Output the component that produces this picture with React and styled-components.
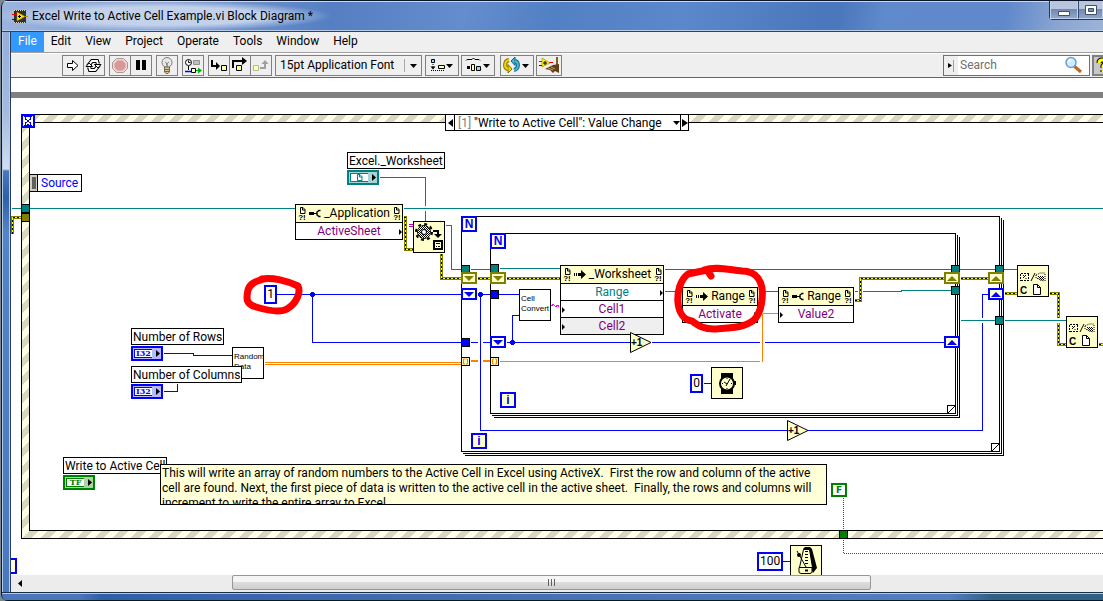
import React from 'react';
import styled, { createGlobalStyle, css } from 'styled-components';

const GlobalStyle = createGlobalStyle`
  *,
  *:before {
    box-sizing: border-box;
  }

  body {
    margin: 0;
    background: #7d8790;
    color: #000;
    font-family: Roboto, 'Open Sans', sans-serif;
    font-size: 12px;
    line-height: 17px;
  }

  button,
  input,
  select {
    margin: 0;
    padding: 0;
    border: 0;
    border-radius: 0;
    background: none;
    color: inherit;
    font: inherit;
  }
`;

const BLUE = '#0000ff';
const TEAL = '#008080';
const OLIVE = '#808000';
const GREEN = '#008000';
const ORANGE = '#ff8000';
const PURPLE = '#800080';
const CREAM = '#ffffcc';

/* ---------- window chrome ---------- */

const Window = styled.div`
  display: flex;
  flex-direction: column;
  height: 100vh;
  margin-left: 1px;
  border-left: 1px solid #101828;
  border-radius: 7px 0 0 7px;
  background: #4a78bc;
  overflow: hidden;
`;

const TitleBar = styled.header`
  display: flex;
  flex: 0 0 32px;
  align-items: center;
  padding-left: 10px;
  border-top: 1px solid #0c1428;
  border-bottom: 1px solid #2c4468;
  box-shadow: inset 0 1px 0 #c8daf2, inset 0 -1px 0 #b4cbea;
  background: radial-gradient(ellipse 170px 15px at 160px 15px, #c3d2ea 60%, transparent 100%),
    linear-gradient(
      100deg,
      #9cb4dd 0%,
      #7f9fd4 15%,
      #557fc2 30%,
      #648dcd 42%,
      #5280c4 50%,
      #5b88ca 62%,
      #4b78bc 74%,
      #4b78bc 76%,
      #5f8acb 80%,
      #6089cb 91%,
      #8ba6d2 96%,
      #9db3d8 100%
    );

  h1 {
    flex: 1;
    margin: 0 0 0 4px;
    font-size: 12px;
    font-weight: 400;
    white-space: nowrap;
  }
`;

const WindowButtons = styled.div`
  display: flex;
  align-self: flex-start;
  height: 19px;
  border: 1px solid #26385a;
  border-width: 0 0 1px 1px;
  border-radius: 0 0 0 4px;
`;

const WindowButton = styled.button`
  display: grid;
  place-items: center;
  width: 28px;
  border: 1px solid #c5d3e8;
  border-top: 0;
  background: linear-gradient(#b7c6de 0 48%, #7288b0 50%, #8ea6cc);

  & + & {
    width: 25px;
    border-left: 1px solid #33486e;
  }
`;

const Body = styled.div`
  display: flex;
  flex: 1;
  min-height: 0;
`;

const LeftFrame = styled.div`
  flex: 0 0 9px;
  border: 1px solid #b4cbea;
  border-width: 0 0 0 1px;
  box-shadow: inset -1px 0 0 #263c60, inset -2px 0 0 #b9cde8;
  background: linear-gradient(
    #96afd9 0,
    #a4bade 80px,
    #d3deef 137px,
    #4a78bc 139px,
    #2f5fa4 165px,
    #5384c6 200px,
    #4a78bc 100%
  );
`;

const BottomFrame = styled.div`
  flex: 0 0 9px;
  border-top: 1px solid #1c2c44;
  border-bottom: 1px solid #0c1428;
  box-shadow: inset 0 1px 0 #b0c8e4;
  background: linear-gradient(90deg, #4a76ba 0 7%, #2e60a8 9%, #3a68ae 24%, #4a76b8 60%, #5080c0 86%, #2c6084 90%);
`;

const Content = styled.div`
  display: flex;
  flex: 1;
  flex-direction: column;
  min-width: 0;
  background: #fff;
`;

const MenuBar = styled.nav`
  display: flex;
  height: 21px;
  border-bottom: 1px solid #a0a0a0;
  background: #efefef;
`;

const MenuItem = styled.button`
  padding: 0 7px 1px;
  background: ${({ $active }) => ($active ? '#3399ff' : 'transparent')};
  color: ${({ $active }) => ($active ? '#fff' : '#000')};
`;

/* ---------- toolbar ---------- */

const Toolbar = styled.div`
  display: flex;
  flex: 0 0 25px;
  justify-content: space-between;
  padding: 1px 0 1px 51px;
  border-top: 1px solid #fff;
  border-bottom: 1px solid #646464;
  background: #efefef;
`;

const ToolCluster = styled.div`
  display: flex;
  gap: ${({ $gap }) => $gap}px;
`;

const ToolGroup = styled.div`
  display: flex;
  height: 21px;
  border: 1px solid #808080;
`;

const ToolButton = styled.button`
  display: flex;
  align-items: center;
  width: ${({ $width = 20 }) => $width}px;
  height: 19px;

  & + & {
    width: 21px;
    border-left: 1px solid #808080;
  }
`;

const FontPicker = styled.div`
  display: grid;
  grid-template-columns: 1fr 17px;
  align-items: center;
  width: 147px;
  height: 21px;
  padding-left: 4px;
  border: 1px solid #808080;

  select {
    height: 19px;
    appearance: none;
    outline: 0;
  }

  svg {
    border-left: 1px solid #a8a8a8;
  }
`;

const SearchBox = styled.div`
  display: flex;
  width: 147px;
  height: 21px;
  border: 1px solid #707070;
  background: #fff;

  button {
    width: 14px;
    background: #efefef;
  }

  input {
    flex: 1;
    min-width: 0;
    padding-left: 2px;
    outline: 0;
  }

  input::placeholder {
    color: #6f6f6f;
    opacity: 1;
  }
`;

const HelpButton = styled.button`
  flex: 0 0 11px;
  height: 21px;
  border: 2px solid #808080;
  border-right: 0;
  background: #c8c8c8;
  overflow: hidden;
`;

/* ---------- block diagram ---------- */

const DiagramEdge = styled.div`
  flex: 0 0 20px;
  border-bottom: 6px solid #808080;
`;

const Diagram = styled.main`
  position: relative;
  flex: 1;
  min-height: 0;
  overflow: hidden;
`;

// the part of the diagram scrolled out of view
const ORIGIN = { x: 11, y: 98 };

const placed = css`
  position: absolute;
  left: ${({ $x }) => $x - ORIGIN.x}px;
  top: ${({ $y }) => $y - ORIGIN.y}px;
`;

const Layer = styled.svg`
  position: absolute;
  inset: 0;
  width: 100%;
  height: 100%;
  pointer-events: none;
`;

const EventStructure = styled.section`
  ${placed}
  right: -20px;
  height: 425px;
  padding: 7px;
  border: 1px solid #000;
  background: linear-gradient(
      135deg,
      #ffffe6 25%,
      #d8d8c2 25% 50%,
      #ffffe6 50% 75%,
      #d8d8c2 75%
    )
    0 0 / 18px 18px;

  div {
    height: 100%;
    border: 1px solid #000;
    background: #fff;
  }
`;

const CaseSelector = styled.div`
  ${placed}
  display: flex;
  width: 244px;
  height: 17px;
  border: 1px solid #000;
  background: #fff;

  button {
    display: grid;
    place-items: center;
    width: 8px;
  }

  label {
    padding-left: 3px;
    border-left: 1px solid #000;
    color: #808080;
  }

  select {
    flex: 1;
    min-width: 0;
    height: 17px;
    padding-left: 3px;
    appearance: none;
    outline: 0;
  }

  button:last-child {
    border-left: 1px solid #000;
  }
`;

const EventData = styled.div`
  ${placed}
  display: flex;
  height: 18px;
  border: 1px solid #000;
  background: #fff;
  color: ${BLUE};

  &:before {
    content: '';
    width: 7px;
    border: 2px solid #d0d0c0;
    border-right-width: 1px;
    background: #606060;
  }

  span {
    height: 16px;
    padding: 0 3px;
    border-left: 1px solid #000;
  }
`;

const Loop = styled.section`
  ${placed}
  width: ${({ $w }) => $w}px;
  height: ${({ $h }) => $h}px;
  border: 1px solid #000;
  background: #fff;
  box-shadow: 1px 1px 0 #fff, 2px 2px 0 #000, 3px 3px 0 #fff, 4px 4px 0 #000;

  svg {
    position: absolute;
    right: -1px;
    bottom: -1px;
  }
`;

const LoopTerminal = styled.div`
  ${placed}
  width: ${({ $size = 16 }) => $size}px;
  height: ${({ $size = 16 }) => $size}px;
  border: 2px solid ${BLUE};
  background: ${CREAM};
  color: ${BLUE};
  font: 700 12px/12px 'Liberation Sans', sans-serif;
  text-align: center;
`;

const Tunnel = styled.div`
  ${placed}
  display: grid;
  width: 9px;
  height: 9px;
  border: 1px solid #000;
  background: ${({ $color }) => $color};
`;

const Register = styled.div`
  ${placed}
  display: grid;
  place-items: center;
  width: 16px;
  height: 12px;
  border: 2px solid ${({ $color }) => $color};
  background: ${CREAM};
`;

const Caption = styled.label`
  ${placed}
  height: 17px;
  padding: 0 1px;
  border: 1px solid #000;
  background: #fff;
  white-space: nowrap;
`;

const TerminalBox = styled.button`
  ${placed}
  display: flex;
  width: 32px;
  height: 15px;
  padding: 1px;
  border: 2px solid ${({ $color }) => $color};
  background: ${({ $tint }) => $tint};
  color: ${({ $color }) => $color};
  font: 700 8px/7px 'DejaVu Serif', serif;

  span {
    display: grid;
    flex: 1;
    place-items: center;
    height: 9px;
    border: 1px solid ${({ $color }) => $color};
    border-right: 0;
    background: #fff;
  }

  svg {
    flex: none;
  }
`;

const Constant = styled.div`
  ${placed}
  height: ${({ $h = 19 }) => $h}px;
  min-width: 13px;
  padding: 0 1px;
  border: 2px solid ${({ $color = BLUE }) => $color};
  background: #fff;
  line-height: 15px;
  text-align: center;
`;

const BoolConstant = styled(Constant)`
  width: 16px;
  color: ${GREEN};
  font: 700 9px/10px 'DejaVu Sans', sans-serif;
`;

const NodeBox = styled.div`
  ${placed}
  width: ${({ $w }) => $w}px;
  border: 1px solid #000;
  background: #fff;
`;

const NodeHeader = styled.div`
  display: flex;
  align-items: center;
  justify-content: space-between;
  height: 17px;
  padding: 0 1px 0 2px;
  background: ${CREAM};
`;

const RefMark = styled.span`
  display: flex;
  flex-direction: column;
  align-items: center;
  width: 8px;
  font: 700 8px/7px 'Liberation Sans', sans-serif;
`;

const NodeRow = styled.div`
  display: grid;
  grid-template-columns: 4px 1fr 4px;
  align-items: center;
  height: 17px;
  border-top: 1px solid #000;
  background: ${({ $shaded }) => ($shaded ? '#efefef' : '#fff')};
  color: ${({ $color = PURPLE }) => $color};
  text-align: center;
`;

const SubVi = styled.div`
  ${placed}
  width: 32px;
  height: 32px;
  border: 1px solid #000;
  background: ${({ $plain }) => ($plain ? '#fff' : CREAM)};
  font: 8px/10px 'Liberation Sans', sans-serif;
  overflow: hidden;
`;

const SubViText = styled.div`
  padding: 4px 0 0 1px;
`;

const Increment = styled.svg`
  ${placed}
  font: 700 10px 'Liberation Sans', sans-serif;
`;

const Comment = styled.p`
  ${placed}
  width: 667px;
  height: 41px;
  margin: 0;
  padding: 1px;
  border: 1px solid #000;
  background: #ffffd8;
  line-height: 15px;
  white-space: pre;
  overflow: hidden;
`;

const Scrollbar = styled.div`
  display: flex;
  flex: 0 0 17px;
  background: #ececec;

  button {
    width: 17px;
  }
`;

const ScrollThumb = styled.div`
  display: grid;
  place-items: center;
  width: 639px;
  height: 15px;
  margin-left: 204px;
  border: 1px solid #979797;
  border-radius: 2px;
  background: linear-gradient(#f5f5f5 0 45%, #dcdcdc 50%, #cfcfcf);
`;

/* ---------- small drawings ---------- */

const Triangle = ({ dir = 'down', color = '#000', w = 7, h = 4 }) => {
  const points = {
    down: `0,0 ${w},0 ${w / 2},${h}`,
    up: `0,${h} ${w},${h} ${w / 2},0`,
    left: `${w},0 ${w},${h} 0,${h / 2}`,
    right: `0,0 ${w},${h / 2} 0,${h}`,
  };

  return (
    <svg width={w} height={h} aria-hidden="true">
      <polygon points={points[dir]} fill={color} />
    </svg>
  );
};

const PageIcon = ({ color = '#000' }) => (
  <svg width="7" height="7" fill="none" stroke={color}>
    <path d="M1.500 .5h2.500l2 2v4H1.500zM3.500 .5v2.500H6" />
  </svg>
);

const PropertyIcon = () => (
  <svg width="12" height="9">
    <path d="M0 3h5v3H0zM5 4h3v1H5z" />
    <path d="M11.500 1.500H10L8 3v3l2 1.500h1.500" fill="none" stroke="#000" strokeWidth="1.400" />
  </svg>
);

const InvokeIcon = () => (
  <svg width="12" height="9">
    <path d="M0 3h1v3H0zM2 3h1v3H2zM4 3h4v3H4zM7 0l5 4.500L7 9z" />
  </svg>
);

const DropArrow = () => <path d="M0 0h7L3.500 4z" />;

const AppIcon = () => (
  <svg width="16" height="15" aria-hidden="true">
    <path d="M2 1h12v13H2z" fill="#30302c" />
    <path d="M2 1.500h12M2 13.500h12" stroke="#d8d8c8" strokeDasharray="1 1" />
    <path d="M5 3l8 4.500L5 12z" fill="#ffe400" stroke="#a88800" strokeWidth=".5" />
    <path d="M6 7.500h3M7.500 6v3" stroke="#000" />
    <path d="M0 5.500h5" stroke="#e00000" />
    <path d="M0 10.500h4" stroke="#0000e0" />
    <path d="M13 7.500h3" stroke="#e07000" />
  </svg>
);

const RunIcon = () => (
  <svg width="20" height="19">
    <path d="M4.500 7.500h5v-3l5.500 5-5.500 5v-3h-5z" fill="#fff" stroke="#000" />
  </svg>
);

const RunLoopIcon = () => (
  <svg width="20" height="19" fill="none">
    <path d="M4 10L8 5h3M15 9l-4 5H8" stroke="#000" strokeWidth="4" />
    <path d="M4.500 9L8 5h4M14.500 10L11 14H7" stroke="#fff" strokeWidth="2" />
    <path d="M11 5h2l1 3" stroke="#000" strokeWidth="4" />
    <path d="M8 14H6l-1-3" stroke="#000" strokeWidth="4" />
    <path d="M10 5h3l1 3.500M9 14H6l-1-3.500" stroke="#fff" strokeWidth="2" />
    <path d="M10.500 8.500h6.500L14 12zM8.500 10.500H2L5 7z" fill="#fff" stroke="#000" />
  </svg>
);

const AbortIcon = () => (
  <svg width="20" height="19">
    <path d="M6.500 2.500h7l4 4v6l-4 4h-7l-4-4v-6z" fill="#f0d4d4" stroke="#a89898" />
    <path d="M7.500 4.500h5l3 3v4l-3 3h-5l-3-3v-4z" fill="#d89898" />
  </svg>
);

const PauseIcon = () => (
  <svg width="20" height="19">
    <path d="M5 4h4v10H5zM11 4h4v10h-4z" />
  </svg>
);

const BulbIcon = () => (
  <svg width="20" height="19">
    <circle cx="10" cy="6.500" r="5" fill="#e8e8e8" stroke="#808080" />
    <path d="M8 6l1.500 1L10 11l.5-4L12 6" fill="none" stroke="#888" />
    <path d="M7.500 11h5v5l-1.500 1.500H9L7.500 16z" fill="#d8c890" stroke="#706850" />
    <path d="M8 13.500h4M8 15.500h4" stroke="#706850" />
  </svg>
);

const RetainIcon = () => (
  <svg width="20" height="19" fill="none">
    <circle cx="5.500" cy="6.500" r="3" fill="#fff" stroke="#000" />
    <path d="M5.500 4.500v2h2M5.500 10v4" stroke="#000" />
    <path d="M10.500 4.500h6v4h-6z" fill="#c0c0c0" stroke="#909090" />
    <path d="M2 15.500h6" stroke="#0000ff" strokeWidth="1.500" />
    <path d="M8.500 12.500h4v4h-4z" fill="#ffffc0" stroke="#000" />
    <path d="M13 14.500h2" stroke="#00b000" />
    <path d="M15 11.500l4 3-4 3z" fill="#00b000" />
  </svg>
);

const StepIntoIcon = () => (
  <svg width="20" height="19">
    <path d="M3 4v6h5" fill="none" stroke="#000" strokeWidth="2" />
    <path d="M7 6l4 4-4 4z" />
    <path d="M12.500 9.500h5v5h-5z" fill="#ffffa0" stroke="#000" />
  </svg>
);

const StepOverIcon = () => (
  <svg width="20" height="19">
    <path d="M3 12V5h10" fill="none" stroke="#000" strokeWidth="2" />
    <path d="M12 1l5 4-5 4z" />
    <path d="M6.500 9.500h5v5h-5z" fill="#ffffa0" stroke="#000" />
  </svg>
);

const StepOutIcon = () => (
  <svg width="20" height="19">
    <path d="M2.500 9.500h5v5h-5z" fill="#ffffb8" stroke="#b8b898" />
    <path d="M9 12h5V7" fill="none" stroke="#a0a0a0" strokeWidth="2" />
    <path d="M10.500 8l3.500-4 3.500 4z" fill="#a0a0a0" />
  </svg>
);

const AlignIcon = () => (
  <svg width="32" height="19" fill="none">
    <path d="M5.500 3.500h3v3h-3z" fill="#80e0ff" stroke="#000" />
    <path d="M7 8v4M5 14.500h14" stroke="#000" strokeDasharray="1 1" />
    <path d="M4.500 10.500h5L7 13.500z" fill="#000" />
    <path d="M12.500 9.500h6v3h-6z" fill="#ffffa0" stroke="#000" />
    <g transform="translate(20 8)" fill="#000">
      <DropArrow />
    </g>
  </svg>
);

const DistributeIcon = () => (
  <svg width="32" height="19" fill="none">
    <path d="M4 4.500l1-1h5l1.500-1.500 1.500 1.500h4l1 1" stroke="#000" />
    <path d="M5 10h3v3H5z" fill="#000" />
    <path d="M9.500 8.500h3v6h-3z" fill="#ffffa0" stroke="#000" />
    <path d="M14.500 10.500h4v4h-4z" fill="#80e0ff" stroke="#000" />
    <g transform="translate(21 8)" fill="#000">
      <DropArrow />
    </g>
  </svg>
);

const ReorderIcon = () => (
  <svg width="32" height="19" fill="none">
    <path d="M8 4C3 5 3 12 7 13" stroke="#807000" strokeWidth="4" />
    <path d="M7 8.500l4 4.500-4 4z" fill="#f0d800" stroke="#807000" />
    <path d="M8 4C3 5 3 12 7 13" stroke="#f0d800" strokeWidth="2" />
    <path d="M13 14c5-1 5-8 1-9" stroke="#186080" strokeWidth="4" />
    <path d="M14 9.500L10 5l4-4z" fill="#40b8d8" stroke="#186080" />
    <path d="M13 14c5-1 5-8 1-9" stroke="#40b8d8" strokeWidth="2" />
    <g transform="translate(21 8)" fill="#000">
      <DropArrow />
    </g>
  </svg>
);

const CleanUpIcon = () => (
  <svg width="24" height="19">
    <path d="M2 5.500h4M12 6.500h4" stroke="#f00000" />
    <path d="M2 9.500h4" stroke="#0000ff" />
    <path d="M5 2l8 5-8 4z" fill="#ffee00" stroke="#807000" strokeWidth=".5" />
    <path d="M6 7h4M8 5v4" stroke="#000" />
    <path d="M19 1h2v8h-2z" fill="#806020" />
    <path d="M16 9l6-1v9l-4-2-2 2-3-3-5-1z" fill="#604018" />
    <path d="M11 12l5 2M14 11l4 2" stroke="#d0a060" />
  </svg>
);

const MagnifierIcon = () => (
  <svg width="25" height="19">
    <path d="M10 10l7 6" stroke="#b86820" strokeWidth="3" />
    <circle cx="7" cy="6.500" r="5" fill="#d0ecff" stroke="#6aa0d8" strokeWidth="1.500" />
    <path d="M4.500 5.500l2-2" stroke="#fff" strokeWidth="2" />
  </svg>
);

const GearIcon = () => (
  <svg width="30" height="30">
    <defs>
      <pattern id="dither" width="2" height="2" patternUnits="userSpaceOnUse">
        <path d="M0 0h1v1H0zM1 1h1v1H1z" />
      </pattern>
    </defs>
    <g fill="none" stroke="#000">
      <circle cx="10" cy="10" r="8" strokeWidth="2" strokeDasharray="3 3.280" />
      <circle cx="10" cy="10" r="6.500" />
    </g>
    <circle cx="10" cy="10" r="6" fill={CREAM} />
    <circle cx="10" cy="10" r="6.500" fill="url(#dither)" shapeRendering="crispEdges" />
    <circle cx="10" cy="10" r="2.500" fill="#fff" stroke="#000" />
    <path d="M19 9h5v4" fill="none" stroke="#000" strokeWidth="2" />
    <path d="M20 12h8l-4 4z" />
    <path d="M20 19h8v8h-8z" fill={CREAM} stroke="#000" strokeWidth="2" />
    <path d="M22 21.500h4M22 24.500h1M24 24.500h2" stroke="#000" />
  </svg>
);

const CloseRefIcon = () => (
  <svg width="30" height="30">
    <g fill="none" stroke="#000">
      <path d="M3 7.500h8M3 14.500h8M2.500 8v7M10.500 8v7" strokeDasharray="2 1" />
      <path d="M5 12l3-3M5 9l1 1M8 12v1" />
      <path d="M13 15l4-8" />
      <path d="M18 9l4-2h5M18 9v3l8 3M27 8v7" strokeDasharray="1 1" />
    </g>
    <path d="M20 10h6v4l-3 1-3-3z" fill="url(#dither)" />
    <text x="2" y="28" fontSize="10" fontWeight="700">
      C
    </text>
    <path d="M15.500 18.500h4l3 3v7h-7zM19.500 18.500v3h3" fill="#fff" stroke="#000" />
  </svg>
);

const WatchIcon = () => (
  <svg width="30" height="30">
    <path d="M9 5h12v5H9zM9 21h12v5H9z" />
    <circle cx="15" cy="15.500" r="7" fill={CREAM} stroke="#000" strokeWidth="2" />
    <path d="M18 11l-4 7M12 14l3 2M10 15.500h1M19 15.500h1M15 10v1M15 20v1" stroke="#000" />
    <path d="M22 13h2v4h-2z" />
  </svg>
);

const MetronomeIcon = () => (
  <svg width="30" height="30">
    <path d="M12 3l2-2h5l2 2 5 19-4 5z" />
    <path d="M12.500 3.500h6l3 18h-13z" fill={CREAM} stroke="#000" />
    <path d="M15.500 5v14" stroke="#000" strokeWidth="3" strokeDasharray="1 2" />
    <path d="M8 21.500h13v5l-2 1H10l-2-1z" fill={CREAM} stroke="#000" />
    <path d="M6 5l9 16" stroke="#000" />
    <circle cx="8" cy="9" r="2" />
    <path d="M14 24.500h3" stroke="#000" strokeWidth="2" />
  </svg>
);

const IndexIcon = () => (
  <svg width="7" height="7" fill="none" stroke={ORANGE}>
    <path d="M3 1H1.500v5H3M4 1h1.500v5H4" />
  </svg>
);

/* ---------- wires ---------- */

// breaks: drawn with a gap around it where it passes over an earlier wire
const wires = [
  { color: TEAL, d: 'M379 177H425V221' },
  { color: TEAL, d: 'M11 208H295M403 208H1103', breaks: true },
  { color: TEAL, d: 'M445 225H451V269H461M470 269H490M499 268H560M664 269H1017' },
  { color: TEAL, d: 'M664 291H682M758 291H778M854 291H901V290H951' },
  { kind: 'error', d: 'M12 233V217H21' },
  { kind: 'error', d: 'M403 217H405V249H413' },
  { kind: 'error', d: 'M441 253V278H461M477 278H490M506 278H560' },
  { kind: 'error', d: 'M854 300H860V278H944M960 278H988', breaks: true },
  { kind: 'error', d: 'M1004 293H1017M1049 293H1058V344H1066M1098 344H1103' },
  { color: '#c000c0', d: 'M408 224H413M408 226H413' },
  { color: BLUE, d: 'M276 294H461M477 294H519M312 294V342H461' },
  { color: BLUE, d: 'M470 342H490M506 342H630M512 342V315H519M651 342H944' },
  { color: BLUE, d: 'M163 353H193V355H232M163 391H177V383' },
  { color: ORANGE, d: 'M264 362H461M264 364H461M470 360H490M470 361H490M499 361H762' },
  { color: ORANGE, d: 'M762 361V313', breaks: true },
  { color: ORANGE, d: 'M762 313H778' },
  { color: BLUE, d: 'M480 297V430', breaks: true },
  { color: BLUE, d: 'M480 294V430H787M807 430H982V294H988' },
  { color: TEAL, d: 'M960 320H995M1004 320H1066', breaks: true },
  { color: BLUE, d: 'M703 383H711M782 561H790' },
  { color: GREEN, d: 'M843 497V553H1103', dash: '1 1' },
  { color: '#ff00ff', d: 'M551 305l2-1 2 2 2-1 2 1' },
];

const junctions = [
  [312, 294],
  [480, 294],
  [512, 342],
];

const Wires = () => (
  <Layer aria-hidden="true">
    <g
      transform={`translate(${0.5 - ORIGIN.x} ${0.5 - ORIGIN.y})`}
      fill="none"
      shapeRendering="crispEdges"
    >
      {wires.map(({ d, kind, color, breaks, dash }) => (
        <g key={d}>
          {breaks && <path d={d} stroke="#fff" strokeWidth="5" />}
          {kind === 'error' ? (
            <>
              <path d={d} stroke={OLIVE} strokeWidth="3" />
              <path d={d} stroke="#ffff00" />
              <path d={d} stroke="#000" strokeDasharray="2 2" />
            </>
          ) : (
            <path d={d} stroke={color} strokeDasharray={dash} />
          )}
        </g>
      ))}
      {junctions.map(([x, y]) => (
        <path key={`${x}-${y}`} d={`M${x - 1} ${y - 2}h2v1h1v2h-1v1h-2v-1h-1v-2h1z`} fill={BLUE} stroke={BLUE} />
      ))}
    </g>
  </Layer>
);

const Marker = () => (
  <Layer aria-hidden="true">
    <g
      transform={`translate(${-ORIGIN.x} ${-ORIGIN.y})`}
      fill="none"
      stroke="#ff0000"
      strokeLinecap="round"
      strokeLinejoin="round"
    >
      <path
        strokeWidth="7"
        d="M262 279C272 277 288 281 298 286C301 292 297 303 287 309C280 313 266 310 256 307C246 304 246 299 248 290C250 283 257 281 264 279"
      />
      <path
        strokeWidth="7"
        d="M711 276L707 270L688 274C680 280 677 292 678 303C679 313 684 320 692 321C698 325 702 329 714 329C730 328 744 328 754 320C762 312 763 296 762 288C760 276 752 271 742 271C730 270 716 266 704 270"
      />
    </g>
  </Layer>
);

/* ---------- diagram parts ---------- */

const tunnels = [
  [21, 204, TEAL],
  [21, 213, OLIVE],
  [461, 265, TEAL],
  [490, 264, TEAL],
  [490, 290, BLUE],
  [461, 338, BLUE],
  [951, 265, TEAL],
  [995, 265, TEAL],
  [951, 286, TEAL],
  [995, 316, TEAL],
  [839, 530, GREEN],
];

const registers = [
  [461, 272, OLIVE, 'down'],
  [490, 272, OLIVE, 'down'],
  [461, 288, BLUE, 'down'],
  [490, 336, BLUE, 'down'],
  [944, 272, OLIVE, 'up'],
  [988, 272, OLIVE, 'up'],
  [988, 288, BLUE, 'up'],
  [944, 336, BLUE, 'up'],
];

const nodes = [
  { x: 295, y: 204, w: 108, name: '_Application', rows: [{ text: 'ActiveSheet', out: true }] },
  {
    x: 560,
    y: 265,
    w: 104,
    name: '_Worksheet',
    invoke: true,
    rows: [
      { text: 'Range', color: TEAL, out: true },
      { text: 'Cell1', in: true },
      { text: 'Cell2', in: true, shaded: true },
    ],
  },
  { x: 682, y: 287, w: 76, name: 'Range', invoke: true, rows: [{ text: 'Activate', out: true }] },
  { x: 778, y: 287, w: 76, name: 'Range', rows: [{ text: 'Value2', in: true }] },
];

const Node = ({ x, y, w, name, invoke, rows }) => (
  <NodeBox $x={x} $y={y} $w={w}>
    <NodeHeader>
      <RefMark>
        <PageIcon />
        ?!
      </RefMark>
      {invoke ? <InvokeIcon /> : <PropertyIcon />}
      <span>{name}</span>
      <RefMark>
        <PageIcon />
        ?!
      </RefMark>
    </NodeHeader>
    {rows.map(row => (
      <NodeRow key={row.text} $color={row.color} $shaded={row.shaded}>
        <span>{row.in && <Triangle dir="right" w={3} h={6} />}</span>
        <span>{row.text}</span>
        <span>{row.out && <Triangle dir="right" w={3} h={6} />}</span>
      </NodeRow>
    ))}
  </NodeBox>
);

const Terminal = ({ x, y, id, color, tint, children }) => (
  <TerminalBox id={id} $x={x} $y={y} $color={color} $tint={tint}>
    <span>{children}</span>
    <svg width="8" height="9">
      <path d="M4 1l4 3.500L4 8z" fill="#000" />
    </svg>
  </TerminalBox>
);

const LoopFrame = props => (
  <Loop {...props}>
    <svg width="9" height="9" fill="#fff" stroke="#000" shapeRendering="crispEdges">
      <path d="M.5 8.500v-8h8v8zM.5 8.500l8-8" />
    </svg>
  </Loop>
);

const PlusOne = ({ x, y }) => (
  <Increment $x={x} $y={y} width="22" height="21">
    <path d="M.5 .5L21 10.500L.5 20.500z" fill={CREAM} stroke="#000" />
    <text x="1" y="14">
      +1
    </text>
  </Increment>
);

const BlockDiagram = () => (
  <Diagram>
    <EventStructure $x={21} $y={114}>
      <div />
    </EventStructure>
    <LoopFrame $x={461} $y={216} $w={539} $h={236} />
    <LoopFrame $x={490} $y={233} $w={466} $h={181} />

    <Wires />

    <LoopTerminal $x={21} $y={114} $size={14}>
      <svg width="10" height="10" fill="none" stroke={BLUE} shapeRendering="crispEdges">
        <path d="M1 .5h8M1 9.500h8M2.500 1v2l5 4v2M7.500 1v2l-5 4v2M4 8.500h2" />
      </svg>
    </LoopTerminal>
    <LoopTerminal $x={461} $y={216}>N</LoopTerminal>
    <LoopTerminal $x={490} $y={233}>N</LoopTerminal>
    <LoopTerminal $x={500} $y={392}>i</LoopTerminal>
    <LoopTerminal $x={471} $y={433}>i</LoopTerminal>
    <LoopTerminal $x={1} $y={558} />

    <CaseSelector $x={445} $y={114}>
      <button aria-label="Previous case">
        <Triangle dir="left" w={5} h={8} />
      </button>
      <label htmlFor="event-case">[1]</label>
      <select id="event-case">
        <option>"Write to Active Cell": Value Change</option>
      </select>
      <button tabIndex={-1} aria-hidden="true">
        <Triangle />
      </button>
      <button aria-label="Next case">
        <Triangle dir="right" w={6} h={8} />
      </button>
    </CaseSelector>

    <EventData $x={29} $y={174}>
      <span>Source</span>
    </EventData>

    {tunnels.map(([x, y, color]) => (
      <Tunnel key={`${x}-${y}`} $x={x} $y={y} $color={color} />
    ))}
    <Tunnel $x={461} $y={357} $color={CREAM}>
      <IndexIcon />
    </Tunnel>
    <Tunnel $x={490} $y={357} $color={CREAM}>
      <IndexIcon />
    </Tunnel>
    {registers.map(([x, y, color, dir]) => (
      <Register key={`${x}-${y}`} $x={x} $y={y} $color={color}>
        <Triangle dir={dir} color={color} w={10} h={5} />
      </Register>
    ))}

    {nodes.map(node => (
      <Node key={`${node.x}-${node.y}`} {...node} />
    ))}

    <SubVi $x={413} $y={221}>
      <GearIcon />
    </SubVi>
    <SubVi $x={519} $y={289} $plain>
      <SubViText>
        Cell
        <br />
        Convert
      </SubViText>
    </SubVi>
    <SubVi $x={232} $y={347} $plain>
      <SubViText>
        Random
        <br />
        Data
      </SubViText>
    </SubVi>
    <SubVi $x={1017} $y={265}>
      <CloseRefIcon />
    </SubVi>
    <SubVi $x={1066} $y={316}>
      <CloseRefIcon />
    </SubVi>
    <SubVi $x={711} $y={367}>
      <WatchIcon />
    </SubVi>
    <SubVi $x={790} $y={545}>
      <MetronomeIcon />
    </SubVi>

    <PlusOne x={630} y={332} />
    <PlusOne x={787} y={420} />

    <Constant $x={264} $y={285}>1</Constant>
    <Constant $x={690} $y={374}>0</Constant>
    <Constant $x={757} $y={552}>100</Constant>
    <BoolConstant $x={831} $y={483} $h={14} $color={GREEN}>
      F
    </BoolConstant>

    <Caption htmlFor="worksheet" $x={347} $y={152}>
      Excel._Worksheet
    </Caption>
    <Terminal id="worksheet" x={347} y={170} color={TEAL} tint="#a8d4d4">
      <PageIcon color={TEAL} />
    </Terminal>
    <Caption htmlFor="rows" $x={131} $y={328}>
      Number of Rows
    </Caption>
    <Terminal id="rows" x={131} y={346} color={BLUE} tint="#b8b8ff">
      I32
    </Terminal>
    <Caption htmlFor="columns" $x={131} $y={366}>
      Number of Columns
    </Caption>
    <Terminal id="columns" x={131} y={384} color={BLUE} tint="#b8b8ff">
      I32
    </Terminal>
    <Caption htmlFor="write-cell" $x={63} $y={457}>
      Write to Active Cell
    </Caption>
    <Terminal id="write-cell" x={63} y={475} color={GREEN} tint="#a8d4a8">
      TF
    </Terminal>

    <Comment $x={160} $y={464}>
      {'This will write an array of random numbers to the Active Cell in Excel using ActiveX.  First the row and column of the active\n'}
      {'cell are found. Next, the first piece of data is written to the active cell in the active sheet.  Finally, the rows and columns will\n'}
      {'increment to write the entire array to Excel.'}
    </Comment>

    <Marker />
  </Diagram>
);

const menus = ['File', 'Edit', 'View', 'Project', 'Operate', 'Tools', 'Window', 'Help'];

const MainToolbar = () => (
  <Toolbar>
    <ToolCluster $gap={5}>
      <ToolCluster $gap={3}>
        <ToolCluster $gap={4}>
          <ToolGroup>
            <ToolButton aria-label="Run">
              <RunIcon />
            </ToolButton>
            <ToolButton aria-label="Run continuously">
              <RunLoopIcon />
            </ToolButton>
          </ToolGroup>
          <ToolGroup>
            <ToolButton aria-label="Abort">
              <AbortIcon />
            </ToolButton>
            <ToolButton aria-label="Pause">
              <PauseIcon />
            </ToolButton>
          </ToolGroup>
          <ToolGroup>
            <ToolButton aria-label="Highlight execution">
              <BulbIcon />
            </ToolButton>
          </ToolGroup>
          <ToolGroup>
            <ToolButton aria-label="Retain wire values">
              <RetainIcon />
            </ToolButton>
          </ToolGroup>
          <ToolGroup>
            <ToolButton aria-label="Step into">
              <StepIntoIcon />
            </ToolButton>
            <ToolButton aria-label="Step over">
              <StepOverIcon />
            </ToolButton>
            <ToolButton aria-label="Step out">
              <StepOutIcon />
            </ToolButton>
          </ToolGroup>
        </ToolCluster>
        <FontPicker>
          <select aria-label="Font">
            <option>15pt Application Font</option>
          </select>
          <svg width="17" height="13">
            <path d="M5 5h7L8.500 9z" />
          </svg>
        </FontPicker>
        <ToolCluster $gap={2}>
          <ToolGroup>
            <ToolButton $width={32} aria-label="Align objects">
              <AlignIcon />
            </ToolButton>
          </ToolGroup>
          <ToolGroup>
            <ToolButton $width={32} aria-label="Distribute objects">
              <DistributeIcon />
            </ToolButton>
          </ToolGroup>
        </ToolCluster>
      </ToolCluster>
      <ToolCluster $gap={2}>
        <ToolGroup>
          <ToolButton $width={32} aria-label="Reorder">
            <ReorderIcon />
          </ToolButton>
        </ToolGroup>
        <ToolGroup>
          <ToolButton $width={24} aria-label="Clean up diagram">
            <CleanUpIcon />
          </ToolButton>
        </ToolGroup>
      </ToolCluster>
    </ToolCluster>
    <ToolCluster $gap={2}>
      <SearchBox>
        <button aria-label="Search options">
          <svg width="14" height="19">
            <path d="M4 7l4 2.500L4 12z" />
            <path d="M9.500 4v12" stroke="#a0a0a0" />
          </svg>
        </button>
        <input type="text" placeholder="Search" aria-label="Search" />
        <MagnifierIcon />
      </SearchBox>
      <HelpButton aria-label="Context help">
        <svg width="16" height="17" fill="none">
          <path d="M5 6Q5 3 8 3T12 5L9 9V11M9 13V15" stroke="#000" strokeWidth="5" />
          <path d="M5 6Q5 3 8 3T12 5L9 9V11M9 13V15" stroke="#ffff00" strokeWidth="3" />
        </svg>
      </HelpButton>
    </ToolCluster>
  </Toolbar>
);

const App = () => (
  <>
    <GlobalStyle />
    <Window>
      <TitleBar>
        <AppIcon />
        <h1>Excel Write to Active Cell Example.vi Block Diagram *</h1>
        <WindowButtons>
          <WindowButton aria-label="Minimize">
            <svg width="12" height="12">
              <path d="M.5 7.500h11v4H.5z" fill="#fff" stroke="#40506c" />
            </svg>
          </WindowButton>
          <WindowButton aria-label="Maximize">
            <svg width="12" height="12">
              <path d="M.5 1.500h11v9H.5z" fill="#fff" stroke="#40506c" />
              <path d="M3.500 4.500h5v3h-5z" fill="#7890b8" stroke="#40506c" />
            </svg>
          </WindowButton>
        </WindowButtons>
      </TitleBar>
      <Body>
        <LeftFrame />
        <Content>
          <MenuBar>
            {menus.map((menu, i) => (
              <MenuItem key={menu} $active={i === 0}>
                {menu}
              </MenuItem>
            ))}
          </MenuBar>
          <MainToolbar />
          <DiagramEdge />
          <BlockDiagram />
          <Scrollbar>
            <button aria-label="Scroll left">
              <Triangle dir="left" w={4} h={7} />
            </button>
            <ScrollThumb>
              <svg width="8" height="7">
                <path d="M.5 0v7M3.500 0v7M6.500 0v7" stroke="#606060" />
              </svg>
            </ScrollThumb>
          </Scrollbar>
        </Content>
      </Body>
      <BottomFrame />
    </Window>
  </>
);

export default App;
